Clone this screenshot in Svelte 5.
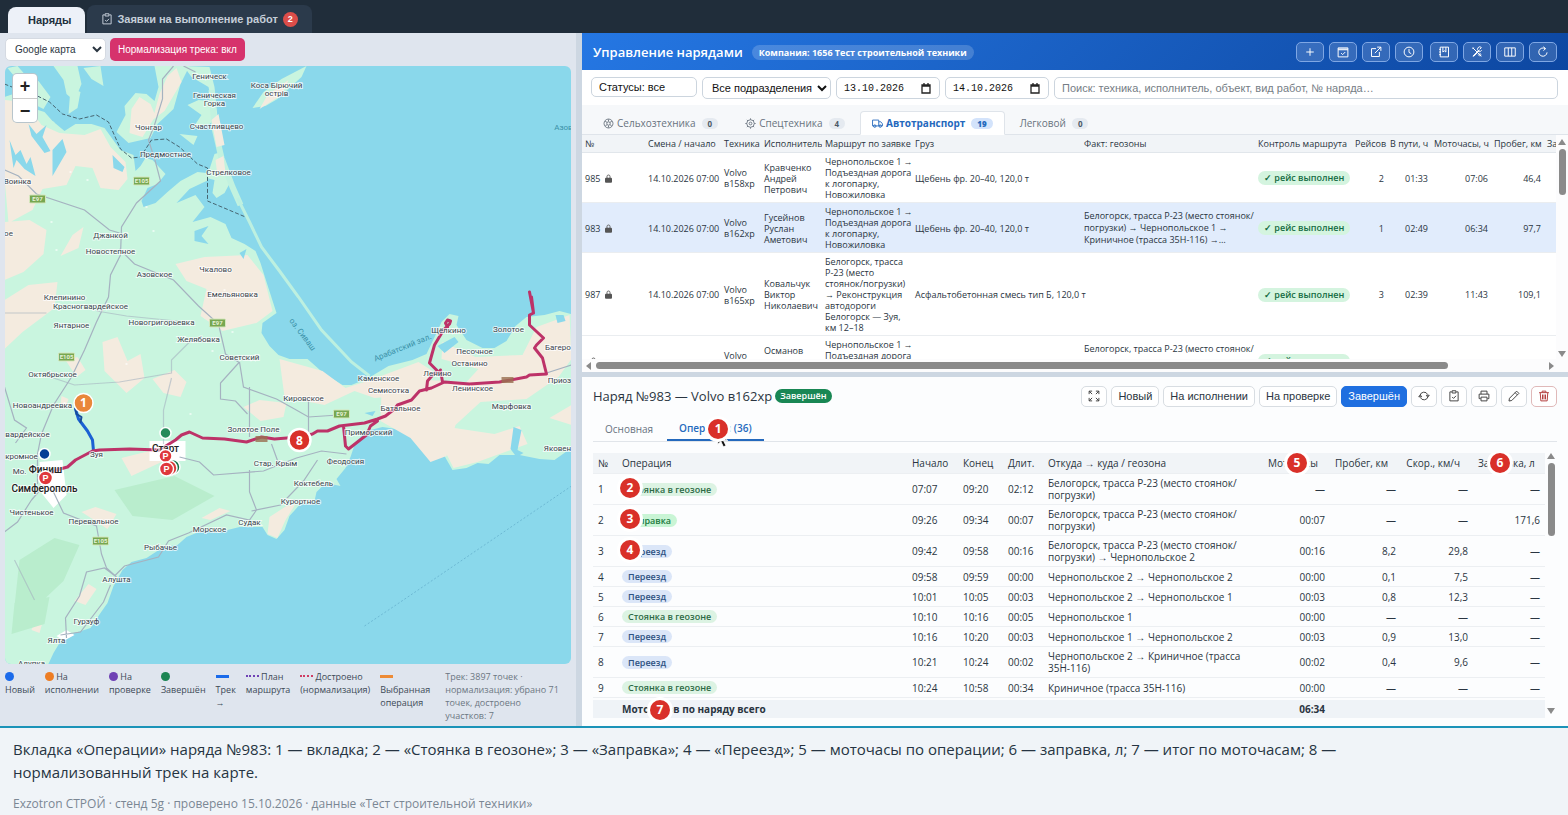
<script>
  const icons = {
    plus: 'M8 3v10M3 8h10',
    calendar: 'M1.5 2.5h13v12h-13zM1.5 5h13M1.5 4h13M5.5 9.5l2 2 3.5-3.5',
    external: 'M8 3.5H2v10.5h10.5V8M9.5 1.5h5v5M14.5 1.5L6.5 9.5',
    clock: 'M8 1.5a6.5 6.5 0 1 0 0 13a6.5 6.5 0 1 0 0-13M8 4v4.5l3 1.8',
    journal: 'M3 1.5h11v13H3zM6.5 1.5v6.5l2-1.6 2 1.6V1.5M1.5 4.5h2.5M1.5 8h2.5M1.5 11.5h2.5',
    tools: 'M2.2 2.2l11.4 11.4M2 3.6l1.600-1.600M2.400 13.600l8.200-8.200M3.200 14.200l8-8M13.800 2.200l-2.300 2.300M13.900 2.100a3 3 0 1 0 .4 3.600M9.400 11.200l2.400 2.600M11.200 9.400l2.700 2.400M10.400 10.400l3.200 3.200',
    columns: 'M1 2.500h14v11H1zM5.700 2.500v11M10.300 2.500v11',
    reload: 'M13.400 8.500a5.500 5.500 0 1 1-2.400-4.900M8.500 1l3 2.500-3 2.600',
    expand: 'M1.500 5.500v-4h4M1.500 1.500l4 4M10.500 1.500h4v4M14.500 1.500l-4 4M1.500 10.500v4h4M1.500 14.500l4-4M14.500 10.500v4h-4M14.500 14.500l-4-4',
    repeat: 'M2.800 7A5.300 5.300 0 0 1 12.800 6M13.200 9A5.300 5.300 0 0 1 3.200 10M11 7h4l-2 2.500zM1 9h4l-2-2.500z',
    clipboard: 'M5 2.500H2.500v12h11v-12H11M5.500 1h5v3h-5zM5.500 9.300l1.900 1.900 3.300-3.400',
    printer: 'M4 5.500v-4h8v4M3.500 11.500h-2v-6h13v6h-2M4 9.500h8v5H4z',
    pencil: 'M11.500 1.500l3 3L5 14l-3.700.7.700-3.700zM9.500 3.500l3 3',
    trash: 'M1.500 3.500h13M5.500 3V1.500h5V3M3 4l.8 10.500h8.400L13 4M6 6v6.500M8 6v6.500M10 6v6.500',
    truck: 'M.8 3h9v8.500h-9zM9.800 5.500h3l2.400 3v3H9.800M4 10a1.800 1.800 0 1 0 0 3.600a1.800 1.800 0 1 0 0-3.600M12 10a1.800 1.800 0 1 0 0 3.600a1.800 1.800 0 1 0 0-3.600',
    wheel: 'M8 1.500a6.500 6.500 0 1 0 0 13a6.500 6.500 0 1 0 0-13M8 5.500a2.500 2.500 0 1 0 0 5a2.500 2.500 0 1 0 0-5M8 2v3M3 12l3-2.500M13 12l-3-2.500M3 4.500l3 2M13 4.500l-3 2M8 11v3',
    gear: 'M8 2.500a5.500 5.500 0 1 0 0 11a5.500 5.500 0 1 0 0-11M8 6a2 2 0 1 0 0 4a2 2 0 1 0 0-4M8 .5v2M8 13.500v2M.5 8h2M13.500 8h2M2.700 2.700l1.500 1.500M11.800 11.800l1.500 1.500M2.700 13.300l1.500-1.500M11.800 4.200l1.500-1.500'
  };

  const headActions = [
    ['plus', 'Добавить'], ['calendar', 'Календарь'], ['external', 'Открыть'], ['clock', 'История'],
    ['journal', 'Журнал'], ['tools', 'Инструменты'], ['columns', 'Колонки'], ['reload', 'Обновить']
  ];
  const orderActions = [
    ['repeat', 'Обновить'], ['clipboard', 'Проверить'], ['printer', 'Печать'], ['pencil', 'Изменить'], ['trash', 'Удалить']
  ];

  const route = 'Чернопольское 1 →\nПодъездная дорога\nк логопарку,\nНовожиловка';
  const orders = [
    { n: '985', car: 'Volvo\nв158хр', who: 'Кравченко\nАндрей\nПетрович', route, cargo: 'Щебень фр. 20–40, 120,0 т', fact: '', trips: '2', way: '01:33', moto: '07:06', km: '46,4' },
    { n: '983', car: 'Volvo\nв162хр', who: 'Гусейнов\nРуслан\nАметович', route, cargo: 'Щебень фр. 20–40, 120,0 т', fact: 'Белогорск, трасса Р-23 (место стоянок/\nпогрузки) → Чернопольское 1 →\nКриничное (трасса 35Н-116) →…', trips: '1', way: '02:49', moto: '06:34', km: '97,7', active: true },
    { n: '987', car: 'Volvo\nв165хр', who: 'Ковальчук\nВиктор\nНиколаевич', route: 'Белогорск, трасса\nР-23 (место\nстоянок/погрузки)\n→ Реконструкция\nавтодороги\nБелогорск — Зуя,\nкм 12–18', cargo: 'Асфальтобетонная смесь тип Б, 120,0 т', fact: '', trips: '3', way: '02:39', moto: '11:43', km: '109,1' },
    { n: '', car: 'Volvo\n\u00a0', who: 'Османов\n\u00a0\n\u00a0', route: 'Чернопольское 1 →\nПодъездная дорога\n\u00a0\n\u00a0', cargo: '', fact: 'Белогорск, трасса Р-23 (место стоянок/\n\u00a0\n\u00a0', trips: '', way: '', moto: '', km: '' }
  ];

  const base = 'Белогорск, трасса Р-23 (место стоянок/\nпогрузки)';
  const ops = [
    ['1', 'Стоянка в геозоне', 'stop', '07:07', '09:20', '02:12', base, '—', '—', '—', '—', '2'],
    ['2', 'Заправка', 'fuel', '09:26', '09:34', '00:07', base, '00:07', '—', '—', '171,6', '3'],
    ['3', 'Переезд', 'move', '09:42', '09:58', '00:16', base + ' → Чернопольское 2', '00:16', '8,2', '29,8', '—', '4'],
    ['4', 'Переезд', 'move', '09:58', '09:59', '00:00', 'Чернопольское 2 → Чернопольское 2', '00:00', '0,1', '7,5', '—', ''],
    ['5', 'Переезд', 'move', '10:01', '10:05', '00:03', 'Чернопольское 2 → Чернопольское 1', '00:03', '0,8', '12,3', '—', ''],
    ['6', 'Стоянка в геозоне', 'stop', '10:10', '10:16', '00:05', 'Чернопольское 1', '00:00', '—', '—', '—', ''],
    ['7', 'Переезд', 'move', '10:16', '10:20', '00:03', 'Чернопольское 1 → Чернопольское 2', '00:03', '0,9', '13,0', '—', ''],
    ['8', 'Переезд', 'move', '10:21', '10:24', '00:02', 'Чернопольское 2 → Криничное (трасса\n35Н-116)', '00:02', '0,4', '9,6', '—', ''],
    ['9', 'Стоянка в геозоне', 'stop', '10:24', '10:58', '00:34', 'Криничное (трасса 35Н-116)', '00:00', '—', '—', '—', '']
  ];

  const towns = [
    ['Геническ', 210, 79], ['Геническая', 215, 98], ['Горка', 215, 106], ['Счастливцево', 217, 129],
    ['Коса Бірючий', 277, 88], ['острів', 277, 96], ['Чонгар', 149, 130], ['Предмостное', 166, 157], ['Стрелковое', 229, 175],
    ['Воинка', 18, 184], ['ое', 9, 236], ['Джанкой', 111, 238], ['Новостепное', 111, 254], ['Чкалово', 216, 272],
    ['Азовское', 155, 277], ['Емельяновка', 233, 297], ['Клепинино', 65, 300], ['Красногвардейское', 91, 309],
    ['Новогригорьевка', 162, 325], ['Янтарное', 72, 328], ['Желябовка', 199, 342], ['Советский', 240, 360],
    ['Октябрьское', 53, 377], ['Новоандреевка', 43, 408], ['вардейское', 28, 437], ['Золотое Поле', 254, 432],
    ['Кировское', 304, 401], ['Каменское', 379, 381], ['Семисотка', 389, 393], ['Батальное', 401, 411],
    ['Приморский', 369, 435], ['Феодосия', 346, 464], ['Стар. Крым', 276, 466], ['Коктебель', 314, 486],
    ['Курортное', 301, 504], ['Судак', 250, 525], ['Морское', 210, 532], ['Рыбачье', 161, 550],
    ['Перевальное', 94, 524], ['Чистенькое', 32, 515], ['кромное', 22, 459], ['Алушта', 117, 582],
    ['Гурзуф', 87, 624], ['Ялта', 57, 643], ['Алупка', 32, 666], ['Щёлкино', 449, 333], ['Песочное', 475, 354],
    ['Останино', 470, 366], ['Ленино', 438, 376], ['Ленинское', 473, 391], ['Золотое', 509, 332],
    ['Багерово', 563, 350], ['Приозёрное', 571, 383], ['Марфовка', 512, 409], ['Яковенково', 567, 451], ['Мо.', 20, 474], ['Зуя', 97, 457]
  ];
  const shields = [['E97', 38, 199], ['E105', 142, 181], ['E97', 218, 323], ['E105', 67, 357], ['E105', 101, 541], ['E97', 342, 414]];
</script>

{#snippet icon(name, size = 12)}
  <svg class="ico" width={size} height={size} viewBox="0 0 16 16" aria-hidden="true"><path d={icons[name]} /></svg>
{/snippet}

<div class="app">
  <nav class="top">
    <button class="page on">Наряды</button>
    <button class="page">{@render icon('clipboard')}Заявки на выполнение работ<b>2</b></button>
  </nav>

  <main>
    <section class="left">
      <div class="maptools">
        <select aria-label="Карта"><option>Google карта</option></select>
        <button class="norm">Нормализация трека: вкл</button>
      </div>
      <div class="map">
        <svg viewBox="5 66 567 598" preserveAspectRatio="xMidYMid slice" role="img" aria-label="Карта">
          <rect x="0" y="60" width="580" height="610" fill="#8ad8eb" />
          <g fill="#c9f5df">
            <path d="M5 97L14 94 24 99 32 108 45 112 53 121 65 131 76 124 92 124 105 128 113 139 121 150 134 155 136 171 141 166 146 158 153 160 166 174 158 184 148 188 142 201 144 207 156 203 168 192 181 181 198 172 207 173 209 180 190 189 177 203 196 195 205 207 193 222 211 217 226 224 232 238 245 244 256 251 261 263 267 282 277 313 263 323 262 333 270 346 279 355 290 359 308 359 325 374 343 385 352 385 369 378 389 366 413 360 427 354 437 333 442 322 450 314 459 316 457 325 467 340 483 348 495 348 507 341 516 326 527 317 545 315 560 311 572 314V448L555 460 540 459 520 455 500 455 489 464 478 463 467 468 453 470 445 456 431 443 418 434 397 429 383 427 367 431 356 442 351 457 346 468 337 479 341 486 326 483 317 492 315 501 300 505 290 516 285 530 277 539 268 535 263 527 240 527 220 532 204 530 187 537 178 545 164 547 147 558 132 562 123 570 114 586 108 603 101 613 91 628 75 633 63 638 54 653 48 666H5z" />
            <path d="M125 106l11-13 11 1 8 7 4-14-4-21h35l-9 18-7 25-16 15-7 14-22 5-12-11 9-17z" />
            <path d="M54 66h24l4 18-7 17-8-7-3-14zM84 68l17-2 3 20-12-7zM30 86l9-5 12 16-7 12-10-5zM71 88l10 4-3 16-9 6zM46 119l9 3-3 9zM8 68l10-2 7 8-8 5z" />
            <path d="M184 66l26 1 5 20 3 30-8 7-16 3 8-12-14-10 11-5 13 1-3-14-17-10zM180 134l18 2-4 9zM207 178l8-24 7-2 10 28-7 13-8 5-4-5 2-13z" />
            <path d="M253 108l11-16 18-13 25-13-5 11-24 22-12 7z" />
          </g>
          <path d="M212 90L215 128 222 158 233 187 241 205" fill="none" stroke="#c2f2df" stroke-width="6" />
          <path d="M238 198L250 222 262 247 280 271 299 297 322 330 352 362 370 376" fill="none" stroke="#bdf0e0" stroke-width="3" />
          <g fill="#f4ebdf">
            <path d="M5 100l20 2 17 23 18 8 25 2 16-6 10 18 15 15 2 17-9 11-18-2-8-20-17-2-9 19-24 4-10 21-24 13-4-45zM132 109l8-12 11 7 5 12-13 21-13-4zM160 94l8-18 9-8 5 14-17 29-12 9zM5 222l25-2 17 10-3 24-20 18-19 8zM5 300l24-15 29-3-3 26-32 24-18 17zM73 235l11-8-5 21-18 8zM176 264l29-7 43-2 16 20 9 36-16 12-34 8-22-15 6-27-20-8zM103 342l15-5 10 24 13-7 4 24-18 15-22-22zM280 359l43 12 23 17 25-8 48-18 14 9-12 23-46 4-20-7-30 14-40-8z" />
            <path d="M382 392l25-13 60 3 12-13-37-10 1-17 33 15 47-2 14-28 33-12 2 44-13 18-32 22-46 3-25 23-9 31-16 6-20-24-30-17zM66 360l12-3 8 13-9 7zM62 396l7 3-3 9-5-2zM153 379l22-9 12 12-6 15-17-4zM122 458l32-8 8 12-30 14zM82 512l14-5 21 7-9 15-15-10zM75 601l14-17 8 5-11 16zM202 518l18-10 11 3-20 9zM244 407l16-7 27 3-3 14-23 4zM270 517l17-11 9-2-10 16-8 18-10-4zM550 418l22-13v20zM268 95l21-15-7 15-22 14zM212 120l7-6 6 31-8 2zM37 617l9-5-6 21-8-3zM216 160l8-4 2 17-8 3z" />
            <path d="M440 440l15-12 40 6 25-8 8 18-28 10-22 8-24 6z" />
          </g>
          <g fill="#b9edcd"><path d="M20 560l35-22 25 7-16 36-35 33-14-8zM115 490l60-14 40 20-42 24-40-4zM15 603l35-6-5 27-33 10z" /></g>
          <g fill="#fff"><path d="M40 462l23-2 4 35-13 13-12-15zM150 441h36v20h-36zM57 636l10-6 8 5-11 6z" /></g>
          <g fill="#8ad8eb">
            <path d="M10 140l6 15 5-5 6 14 4-7 5 19-11-7-8-9-3 8zM29 124l8 10 10-9-4 12 8 14-6 2-13-17zM53 150l10-11 4 13-14 24zM113 155l12 12-2 5-9-4zM195 231l14-5-7 10 7 8-14-3zM240 253l7-4-3 10zM438 346l17-9 4 5-14 11zM514 427l8 3-4 20 6 3-7 4-6-8zM556 315l8 0 2 6-8 2zM365 413l11-2-3 5z" />
          </g>
          <g fill="none" stroke="#fff" stroke-width="2" opacity=".6"><path d="M70 172h2m15 8h2m-38 42h2m3 28h2m88-43h2m5 24h2m-70 67h2m80-21h2m55 13h2m-100 74h2m-40 40h2m100 10h2m20-63h2m-150 52h2m166-71h2m-22-33h2" /></g>
          <g fill="none" stroke="#a5b2c0" stroke-width="1.200">
            <path d="M174 66l-11 13v20l-8 26-6 15 7 22 5 19-24 22-15 24-1 28-10 20-2 22-12 25-12 28-13 27-18 28-12 29-4 20v30M5 170l14 6 18 18 48 16 25 20 10 3M120 249l15 15 39 16 25 26 20 18 7 30 13 8M240 362l-19 21v16l15 2 12 13M240 362l4 25 33 12 18 10 14 8 30-2M250 387v50M5 387l10 33 12 8-11 15M32 500l-14 22-13 10M45 485l-13 15M53 490l11 23 33 13 5 28 5 14 10 9M117 577l-12-9-18 4-7 24-14 22 1 20M111 585l-7 17-23 30-20 3M180 457l20 5 14 13 50-4 33-13 25-7 25 3M250 470v22l7 18-7 10-23-5-38 18-20 8-10 16-34 9-10 10M252 511l29-6 23-24 14-21M184 66l12 6M309 400v35M272 444l8 22M547 373l25-8" />
            <path d="M97 311l30 5 60 6M45 375l30 10 45-3 52-9v-13l22-22M172 378l-8 32v34M5 313h42M15 560l20 40" opacity=".6" />
          </g>
          <path d="M5 84l10 4M38 96l12 6 13 12 17 5 17-4 12 7 12 27 11 9 9-1 11-17 15-1 13 8 18 17 10 4v33l38 16" fill="none" stroke="#476571" stroke-width="1" stroke-dasharray="4 2" />
          <path d="M365 626L395 606 575 484" fill="none" stroke="#6db9d4" stroke-width="1" stroke-dasharray="2 2" />
          <g fill="none" stroke-linejoin="round" stroke-linecap="round">
            <path d="M94 451L93 440 88 431 79 419 76 409" stroke="#1b61d3" stroke-width="3" />
            <path d="M76 408l1 6 5 3-1 5" stroke="#174d9a" stroke-width="2" />
            <path d="M45 477L57 470 68 467 76 460 93 451 100 450 130 449 160 450 176 440 182 435 190 432 203 438 225 439 247 442 262 437 275 439 300 437 313 434 318 431 328 431 340 426 365 423 378 419 386 416 395 409 398 405 412 400 420 391 432 388 445 382 470 384 500 382 527 377 530 375 547 374 543 358 535 348 537 345 544 338 530 325 530 315 534 313 530 292M534 313L532 297M427 390L428 381 435 373 439 372 430 363 435 345 444 330 450 324 451 321 448 320 446 323 448 327M441 370L443 382M344 426L346 446 349 449 367 435 371 426 378 421" stroke="#bd3268" stroke-width="3" />
          </g>
          {#each shields as [t, x, y]}
            <rect x={x - 8} y={y - 4} width="16" height="8" rx="1" fill="#77a751" stroke="#d5e7bd" stroke-width="1" />
            <text class="shield" {x} y={y + 2}>{t}</text>
          {/each}
          <rect x="502" y="377" width="12" height="6" fill="#996f50" opacity=".8" /><rect x="256" y="436" width="12" height="6" fill="#996f50" opacity=".8" />
          {#each towns as [t, x, y]}<text class="town" {x} {y}>{t}</text>{/each}
          <text class="town city" x="45" y="492">Симферополь</text>
          <text class="town city" x="46" y="473">Финиш</text>
          <text class="town city" x="166" y="452">Старт</text>
          <text class="sea" transform="translate(301 336) rotate(53)">оз. Сиваш</text>
          <text class="sea" transform="translate(404 350) rotate(-22)">Арабатский зал.</text>
          <text class="sea" x="566" y="130">Азовс</text>
          <g stroke="#fff" stroke-width="1.500">
            <circle cx="166" cy="433" r="5.500" fill="#278b5b" /><circle cx="45" cy="454" r="5.500" fill="#073e96" />
            <circle cx="173" cy="467" r="7.500" fill="#157347" /><circle cx="170" cy="468" r="7.500" fill="#d73a3a" />
            <circle cx="166" cy="456" r="6.500" fill="#df383c" /><circle cx="167" cy="469" r="7" fill="#df383c" /><circle cx="46" cy="478" r="7" fill="#df383c" />
            <circle cx="84" cy="403" r="9.500" fill="#e9873a" />
          </g>
          <g class="pin"><text x="166" y="459">P</text><text x="167" y="472">P</text><text x="46" y="481">P</text></g>
          <text class="big" x="84" y="407">1</text>
          <circle cx="300" cy="440" r="11" fill="#d93029" stroke="#fff" stroke-width="2.500" />
          <text class="big" x="300" y="445">8</text>
        </svg>
        <div class="zoom"><button aria-label="Приблизить">+</button><button aria-label="Отдалить">−</button></div>
      </div>
      <div class="legend">
        <span><i class="dot" style="background:#1b6bea"></i><br />Новый</span>
        <span><i class="dot" style="background:#ed7d24"></i> На<br />исполнении</span>
        <span><i class="dot" style="background:#6f42b5"></i> На<br />проверке</span>
        <span><i class="dot" style="background:#1c8553"></i><br />Завершён</span>
        <span><i class="dash"></i><br />Трек<br />→</span>
        <span><i class="dots violet"></i> План<br />маршрута</span>
        <span><i class="dots red"></i> Достроено<br />(нормализация)</span>
        <span><i class="dash orange"></i><br />Выбранная<br />операция</span>
        <span class="stat">Трек: 3897 точек ·<br />нормализация: убрано 71<br />точек, достроено<br />участков: 7</span>
      </div>
    </section>

    <div class="split"></div>

    <section class="right">
      <div class="orders">
        <header>
          <h1>Управление нарядами</h1><span class="company">Компания: 1656 Тест строительной техники</span>
          <div class="acts">
            {#each headActions as [name, label]}<button class:sep={name === 'journal'} aria-label={label}>{@render icon(name)}</button>{/each}
          </div>
        </header>
        <div class="filters">
          <input class="status" aria-label="Статусы" value="Статусы: все" />
          <select aria-label="Подразделение"><option>Все подразделения</option></select>
          {#each ['13.10.2026', '14.10.2026'] as d}
            <label class="date"><input aria-label="Дата" value={d} /><svg width="10" height="11" viewBox="0 0 10 11" aria-hidden="true"><path d="M1 2h8v8H1zM1 3h8M3 0v2M7 0v2" fill="none" stroke="#222" stroke-width="1.300" /></svg></label>
          {/each}
          <input class="search" aria-label="Поиск" placeholder="Поиск: техника, исполнитель, объект, вид работ, № наряда…" />
        </div>
        <div class="kinds">
          <button>{@render icon('wheel', 11)}Сельхозтехника<b>0</b></button>
          <button>{@render icon('gear', 11)}Спецтехника<b>4</b></button>
          <button class="on">{@render icon('truck', 11)}Автотранспорт<b>19</b></button>
          <button>Легковой<b>0</b></button>
        </div>
        <div class="gridwrap">
          <div class="scroller">
            <table class="list">
              <colgroup><col class="w63" /><col class="w76" /><col class="w40" /><col class="w61" /><col class="w90" /><col class="w169" /><col class="w174" /><col class="w97" /><col class="w35" /><col class="w44" /><col class="w60" /><col class="w53" /><col /></colgroup>
              <thead>
                <tr><th>№</th><th>Смена / начало</th><th>Техника</th><th>Исполнитель</th><th>Маршрут по заявке</th><th>Груз</th><th>Факт: геозоны</th><th>Контроль маршрута</th><th class="r">Рейсов</th><th class="r">В пути, ч</th><th class="r">Моточасы, ч</th><th class="r">Пробег, км</th><th>За</th></tr>
              </thead>
              <tbody>
                {#each orders as o}
                  <tr class:active={o.active}>
                    <td>{o.n}<svg class="lock" width="7" height="9" viewBox="0 0 7 9" aria-hidden="true"><path d="M2 4V2.500a1.500 1.500 0 0 1 3 0V4" fill="none" stroke="#666" /><rect y="3.800" width="7" height="5" rx="1" fill="#555" /></svg></td>
                    <td>{o.n ? '14.10.2026 07:00' : ''}</td><td class="pre">{o.car}</td><td class="pre">{o.who}</td><td class="pre">{o.route}</td>
                    <td>{o.cargo}</td><td class="fact">{o.fact}</td><td><span class="done">✓ рейс выполнен</span></td>
                    <td class="r">{o.trips}</td><td class="r">{o.way}</td><td class="r">{o.moto}</td><td class="r">{o.km}</td><td></td>
                  </tr>
                {/each}
              </tbody>
            </table>
          </div>
          <div class="vbar"><i class="up"></i><i class="thumb t1"></i><i class="down"></i></div>
          <div class="hbar"><i class="lf"></i><i class="hthumb"></i><i class="rt"></i></div>
        </div>
      </div>

      <div class="order">
        <div class="ohead">
          <h2>Наряд №983 — Volvo в162хр</h2><span class="state">Завершён</span>
          <div class="obtns">
            <button class="sq" aria-label="Развернуть">{@render icon('expand', 12)}</button>
            <button>Новый</button><button>На исполнении</button><button>На проверке</button><button class="on">Завершён</button>
            {#each orderActions as [name, label]}<button class="sq {name}" aria-label={label}>{@render icon(name, 12)}</button>{/each}
          </div>
        </div>
        <div class="otabs">
          <button>Основная</button>
          <button class="on">Операции (36)<span class="mark m1">1</span><svg class="cursor" width="12" height="18" viewBox="0 0 14 20" aria-hidden="true"><path d="M1 0v15l3.500-3.200L7.500 18l3-1.400-3-6h5z" fill="#111" stroke="#fff" /></svg></button>
        </div>
        <div class="owrap">
          <div class="oscroll">
            <table class="ops">
              <colgroup><col class="c1" /><col class="c2" /><col class="c3" /><col class="c4" /><col class="c5" /><col class="c6" /><col class="c7" /><col class="c8" /><col class="c9" /><col class="c10" /></colgroup>
              <thead>
                <tr><th>№</th><th>Операция</th><th>Начало</th><th>Конец</th><th>Длит.</th><th>Откуда → куда / геозона</th><th class="r">Моточасы<span class="mark mh">5</span></th><th class="r">Пробег, км</th><th class="r">Скор., км/ч</th><th class="r">Заправка, л<span class="mark mf">6</span></th></tr>
              </thead>
              <tbody>
                {#each ops as o}
                  <tr>
                    <td>{o[0]}</td>
                    <td><span class="tag {o[2]}">{o[1]}</span>{#if o[11]}<span class="mark mo">{o[11]}</span>{/if}</td>
                    <td>{o[3]}</td><td>{o[4]}</td><td>{o[5]}</td><td class="pre">{o[6]}</td>
                    <td class="r">{o[7]}</td><td class="r">{o[8]}</td><td class="r">{o[9]}</td><td class="r">{o[10]}</td>
                  </tr>
                {/each}
              </tbody>
              <tfoot>
                <tr><td></td><td colspan="5">Моточасов по наряду всего<span class="mark mt">7</span></td><td class="r">06:34</td><td colspan="3"></td></tr>
              </tfoot>
            </table>
          </div>
          <div class="vbar obar"><i class="up"></i><i class="thumb t2"></i><i class="down"></i></div>
        </div>
      </div>
    </section>
  </main>

  <footer>
    <p>Вкладка «Операции» наряда №983: 1 — вкладка; 2 — «Стоянка в геозоне»; 3 — «Заправка»; 4 — «Переезд»; 5 — моточасы по операции; 6 — заправка, л; 7 — итог по моточасам; 8 — нормализованный трек на карте.</p>
    <small>Exzotron СТРОЙ · стенд 5g · проверено 15.10.2026 · данные «Тест строительной техники»</small>
  </footer>
</div>

<style>
  :global(body) { margin: 0; }
  .app { height: 100vh; display: flex; flex-direction: column; font-family: "Open Sans", sans-serif; font-size: 10px; color: #2a3541; overflow: hidden; }
  .app * { box-sizing: border-box; }
  button, input, select { font-family: "Liberation Sans", sans-serif; font-size: 11px; margin: 0; color: inherit; }
  button { padding: 0; border: 0; background: none; white-space: nowrap; }
  .ico { flex: none; }
  .ico path { fill: none; stroke: currentColor; stroke-width: 1.3; }

  .top { height: 33px; flex: none; background: #202d3a; display: flex; align-items: flex-end; padding-left: 8px; gap: 2px; }
  .page { height: 28px; background: #2b3a4b; color: #c5ced9; font-size: 11px; font-weight: 700; border-radius: 8px 8px 0 0; display: flex; align-items: center; gap: 4px; padding: 0 14px; }
  .page.on { height: 26px; background: #edf1f8; color: #22303d; padding: 0 14px 0 20px; }
  .page b { background: #dc4d49; color: #fff; font-size: 9px; width: 15px; height: 15px; line-height: 15px; border-radius: 8px; margin-left: 1px; }

  main { flex: 1; min-height: 0; display: grid; grid-template-columns: minmax(0, 576fr) 6px minmax(0, 986fr); background: #dfe5ee; }
  .left { display: flex; flex-direction: column; padding: 5px 5px 0; min-height: 0; }
  .maptools { display: flex; gap: 4px; margin-bottom: 5px; height: 23px; }
  .maptools select { width: 101px; background: #fff; border: 1px solid #d5dae2; border-radius: 5px; padding-left: 5px; font-size: 10px; }
  .norm { background: #d6336c; color: #fff; border-radius: 5px; padding: 0 8px; font-size: 10px; }
  .map { flex: 1; min-height: 0; position: relative; border-radius: 6px; overflow: hidden; }
  .map > svg { width: 100%; height: 100%; display: block; }
  .town { font: 8px "Roboto", sans-serif; text-anchor: middle; fill: #3b454e; stroke: #fff; stroke-width: 2px; stroke-opacity: .7; paint-order: stroke; }
  .town.city { font-size: 10px; font-weight: 500; fill: #222; }
  .shield { font: 700 6px "Roboto", sans-serif; text-anchor: middle; fill: #e7f2da; }
  .sea { font: 8px "Roboto", sans-serif; text-anchor: middle; fill: #3b91a8; }
  .pin text { font: 700 9px "Liberation Sans", sans-serif; text-anchor: middle; fill: #fff; }
  .big { font: 700 12px "Open Sans", sans-serif; text-anchor: middle; fill: #fff; }
  .zoom { position: absolute; left: 8px; top: 8px; width: 24px; background: #fff; border-radius: 4px; box-shadow: 0 0 0 1px #b8c5cc; display: flex; flex-direction: column; }
  .zoom button { height: 24px; font-size: 18px; font-weight: 700; line-height: 22px; color: #222; }
  .zoom button + button { border-top: 1px solid #ccc; }
  .legend { height: 62px; flex: none; padding-top: 6px; display: flex; font-size: 9px; line-height: 13px; gap: 10px; white-space: nowrap; color: #3d4a57; }
  .dot { display: inline-block; width: 9px; height: 9px; border-radius: 5px; vertical-align: -1px; }
  .dash { display: inline-block; width: 13px; height: 3px; background: #1b6bea; vertical-align: 2px; }
  .dash.orange { background: #ed8b36; }
  .dots { display: inline-block; width: 13px; border-top: 2px dotted #6f42b5; vertical-align: 3px; }
  .dots.red { border-color: #cf3d63; }
  .stat { color: #6c7782; margin-left: 5px; }

  .split { background: #cdd7e2; }
  .right { display: grid; grid-template-rows: minmax(0, 339fr) 5px minmax(0, 349fr); background: #cdd7e2; min-height: 0; }
  .orders { background: #fff; display: flex; flex-direction: column; min-height: 0; grid-row: 1; }
  header { height: 37px; flex: none; display: flex; align-items: center; padding: 1px 11px 0; background: linear-gradient(135deg, #2577e3, #0d47a1); color: #fff; }
  h1 { font-size: 13px; margin: 0; font-weight: 600; }
  .company { margin-left: 9px; background: rgba(255, 255, 255, .18); border-radius: 8px; padding: 0 7px; line-height: 15px; font-size: 9px; font-weight: 700; }
  .acts { margin-left: auto; display: flex; gap: 5px; }
  .acts button { width: 28px; height: 20px; border: 1px solid #7fa7e4; border-radius: 5px; background: rgba(255, 255, 255, .15); display: grid; place-items: center; }
  .acts .sep { margin-left: 2px; }
  .filters { display: flex; gap: 5px; padding: 7px 10px 6px 9px; height: 35px; flex: none; }
  .filters input, .filters select { height: 22px; border: 1px solid #ccd5de; border-radius: 5px; background: #fff; padding: 0 7px; min-width: 0; color: #111; }
  .filters .status { width: 106px; height: 20px; }
  .filters select { width: 129px; padding: 0 0 0 5px; }
  .date { display: flex; align-items: center; width: 104px; height: 22px; border: 1px solid #ccd5de; border-radius: 5px; padding-right: 8px; }
  .filters .date input { flex: 1; border: 0; font-family: "Liberation Mono", monospace; height: 18px; font-size: 10px; }
  .filters .search { flex: 1; }
  .search::placeholder { color: #757d85; opacity: 1; }
  .kinds { height: 30px; flex: none; background: #f6f8fa; display: flex; align-items: flex-end; gap: 3px; padding-left: 9px; border-bottom: 1px solid #dfe4ea; }
  .kinds button { height: 24px; padding: 0 11px; display: flex; align-items: center; gap: 3px; color: #68737e; font-family: "Open Sans", sans-serif; font-size: 10px; border: 1px solid transparent; margin-bottom: -1px; }
  .kinds .on { background: #fff; color: #2469bd; border-color: #dfe4ea; border-bottom-color: #fff; border-radius: 4px 4px 0 0; font-weight: 700; }
  .kinds b { font-size: 8px; line-height: 11px; padding: 0 6px; border-radius: 6px; background: #e5eaf0; margin-left: 3px; color: #4c5966; }
  .kinds .on b { background: #d3e3fb; color: #2469bd; }

  .gridwrap { flex: 1; min-height: 0; display: grid; grid-template: minmax(0, 1fr) 13px / minmax(0, 1fr) 12px; background: #fcfcfd; }
  .scroller { overflow: hidden; grid-row: 1; }
  table { border-collapse: separate; border-spacing: 0; table-layout: fixed; }
  th { text-align: left; font-weight: 500; background: #f1f4f7; white-space: nowrap; }
  .list { width: 1092px; font-size: 9px; line-height: 11px; }
  .list th { height: 18px; padding: 0 3px; border-bottom: 1px solid #e1e6eb; overflow: hidden; }
  .list td { padding: 3px 3px 2px; border-bottom: 1px solid #eaedf0; background: #fff; white-space: nowrap; }
  .list .active td { background: #e1ecfc; }
  .list td.pre { white-space: pre; }
  .list td.fact { white-space: pre; line-height: 12px; }
  .list .r, .ops .r { text-align: right; }
  .w63 { width: 63px; } .w76 { width: 76px; } .w40 { width: 40px; } .w61 { width: 61px; } .w90 { width: 90px; } .w169 { width: 169px; } .w174 { width: 174px; }
  .w97 { width: 97px; } .w35 { width: 35px; } .w44 { width: 44px; } .w60 { width: 60px; } .w53 { width: 53px; }
  .lock { margin-left: 5px; vertical-align: -1px; }
  .done { display: inline-block; background: #d4f4df; color: #146c43; font-weight: 600; border-radius: 7px; line-height: 14px; padding: 0 6px; }
  .vbar { display: flex; flex-direction: column; align-items: center; padding: 4px 0 2px; gap: 4px; }
  .obar { padding-top: 0; padding-bottom: 12px; }
  .hbar { display: flex; align-items: center; padding: 0 2px 0 4px; gap: 5px; }
  .thumb { width: 7px; border-radius: 4px; background: #8a8a8a; }
  .t1 { height: 21%; } .t2 { height: 28%; }
  .hthumb { width: 88%; height: 7px; border-radius: 4px; background: #8a8a8a; }
  .up, .down { border: 4px solid transparent; border-top: 0; border-bottom: 6px solid #8a8a8a; }
  .down { border-top: 6px solid #8a8a8a; border-bottom: 0; margin-top: auto; }
  .lf, .rt { border: 4px solid transparent; border-left: 0; border-right: 5px solid #8a8a8a; }
  .rt { border-left: 5px solid #8a8a8a; border-right: 0; margin-left: auto; }

  .order { grid-row: 3; background: #fcfdfe; display: flex; flex-direction: column; min-height: 0; padding: 8px 11px 0; }
  .ohead { display: flex; align-items: center; height: 22px; flex: none; }
  h2 { font-size: 13px; font-weight: 500; margin: 0; }
  .state { background: #198754; color: #fff; font-weight: 600; font-size: 9px; line-height: 14px; border-radius: 7px; padding: 0 5px; margin-left: 3px; }
  .obtns { margin-left: auto; display: flex; gap: 4px; }
  .obtns button { height: 21px; border: 1px solid #d8dde2; border-radius: 5px; background: #fff; padding: 0 6px; }
  .obtns .sq { width: 26px; padding: 0; display: grid; place-items: center; color: #444; }
  .obtns .trash { color: #b33c3c; border-color: #e0b9b9; }
  .obtns .on { background: #1f6fe0; color: #fff; border-color: #1f6fe0; }
  .otabs { display: flex; margin-top: 10px; border-bottom: 1px solid #e1e5ea; height: 25px; flex: none; }
  .otabs button { padding: 0 12px; position: relative; color: #68737e; font-family: "Open Sans", sans-serif; font-size: 10px; }
  .otabs .on { color: #2469bd; border-bottom: 2px solid #2469bd; font-weight: 600; margin-left: 2px; }
  .mark { position: absolute; width: 20px; height: 20px; border-radius: 50%; background: #d93029; color: #fff; font: 700 12px/20px "Open Sans", sans-serif; text-align: center; box-shadow: 0 0 0 3px #fff; z-index: 2; }
  .m1 { left: 41px; top: 2px; }
  .cursor { position: absolute; left: 50px; top: 14px; z-index: 1; }
  .owrap { margin-top: 11px; display: grid; grid-template-columns: minmax(0, 1fr) 12px; flex: 1; min-height: 0; }
  .oscroll { overflow: hidden; }
  .ops { width: 100%; line-height: 12px; }
  .ops th, .ops td { padding: 3px 5px; border-bottom: 1px solid #eceff2; position: relative; }
  .ops th { height: 21px; }
  .ops th.r { padding-right: 13px; }
  .ops .pre { white-space: pre; }
  .c1 { width: 24px; } .c3 { width: 51px; } .c4 { width: 45px; } .c5 { width: 40px; } .c6 { width: 220px; } .c7 { width: 67px; } .c8 { width: 71px; } .c9 { width: 72px; } .c10 { width: 72px; }
  .tag { display: block; width: max-content; line-height: 13px; border-radius: 7px; padding: 0 6px; font-size: 9px; font-weight: 600; background: #dbe6f8; color: #2f5382; }
  .tag.stop { background: #dcf3e3; color: #2d6a45; }
  .tag.fuel { background: #c9f5d5; color: #1c7a3f; }
  .mo { left: 3px; top: calc(50% - 11px); }
  .mh { right: 23px; top: 0; }
  .mf { right: 35px; top: 0; }
  .mt { left: 33px; top: 0; }
  .ops tfoot td { font-weight: 700; background: #eff3f7; padding: 3px 5px; border: 0; border-top: 2px solid #fcfdfe; }

  footer { flex: none; height: 89px; border-top: 2px solid #1b93b8; background: #f0f4f8; padding: 10px 13px 0; }
  footer p { margin: 0; max-width: 1370px; font-size: 15px; line-height: 23px; color: #263442; }
  footer small { display: block; margin-top: 11px; font-size: 12px; line-height: 17px; color: #7b8794; }
</style>
